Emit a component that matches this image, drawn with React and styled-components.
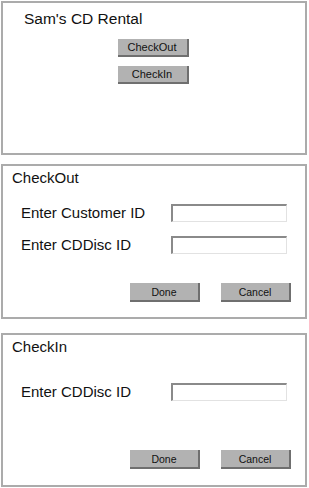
import React from "react";
import styled, { createGlobalStyle } from "styled-components";

const Global = createGlobalStyle`
  html, body { margin: 0; padding: 0; background: #fff; }
  body { font-family: "Liberation Sans", Arial, sans-serif; color: #111; }
`;

const Page = styled.div`
  width: 309px;
  height: 488px;
  padding: 1px 0 0 1px;
  box-sizing: border-box;
  display: flex;
  flex-direction: column;
`;

const Panel = styled.section`
  box-sizing: border-box;
  width: 306px;
  height: ${(p) => p.$h}px;
  margin-top: ${(p) => p.$mt || 0}px;
  border: 2px solid #ababab;
  background: #fff;
  display: flex;
  flex-direction: column;
`;

const MainTitle = styled.div`
  font-size: 15.5px;
  line-height: 18px;
  margin: 7px 0 0 21px;
`;

const MenuButtons = styled.div`
  display: flex;
  flex-direction: column;
  align-items: center;
  gap: 9px;
  margin-top: 11px;
  padding-right: 2px;
`;

const RaisedButton = styled.button`
  box-sizing: border-box;
  width: ${(p) => p.$w || 71}px;
  height: ${(p) => p.$h || 18}px;
  background: #b2b2b2;
  border: none;
  border-right: 2px solid #6f6f6f;
  border-bottom: 2px solid #6f6f6f;
  font-family: "Liberation Sans", Arial, sans-serif;
  font-size: ${(p) => p.$fs || 10.5}px;
  color: #111;
  padding: 0;
  display: flex;
  align-items: center;
  justify-content: center;
`;

const DialogTitle = styled.div`
  font-size: 15px;
  line-height: 17px;
  margin: 3px 0 0 9px;
`;

const Form = styled.div`
  display: grid;
  grid-template-columns: 150px 116px;
  row-gap: 14px;
  margin: ${(p) => p.$mt}px 0 0 18px;
  align-items: center;
`;

const Label = styled.label`
  font-size: 15px;
  line-height: 18px;
`;

const Field = styled.div`
  box-sizing: border-box;
  width: 116px;
  height: 18px;
  background: #fff;
  border-top: 2px solid #8a8a8a;
  border-left: 2px solid #8a8a8a;
  border-right: 1px solid #e2e2e2;
  border-bottom: 1px solid #e2e2e2;
`;

const Actions = styled.div`
  display: flex;
  justify-content: flex-end;
  gap: 21px;
  margin-top: auto;
  margin-bottom: ${(p) => p.$mb}px;
  padding-right: 14px;
`;

export default function App() {
  return (
    <>
      <Global />
      <Page>
        <Panel $h={154}>
          <MainTitle>Sam's CD Rental</MainTitle>
          <MenuButtons>
            <RaisedButton $fs={11}>CheckOut</RaisedButton>
            <RaisedButton $fs={11}>CheckIn</RaisedButton>
          </MenuButtons>
        </Panel>

        <Panel $h={155} $mt={9}>
          <DialogTitle>CheckOut</DialogTitle>
          <Form $mt={18}>
            <Label>Enter Customer ID</Label>
            <Field />
            <Label>Enter CDDisc ID</Label>
            <Field />
          </Form>
          <Actions $mb={15}>
            <RaisedButton $w={70} $h={19}>Done</RaisedButton>
            <RaisedButton $w={70} $h={19}>Cancel</RaisedButton>
          </Actions>
        </Panel>

        <Panel $h={154} $mt={14}>
          <DialogTitle>CheckIn</DialogTitle>
          <Form $mt={28}>
            <Label>Enter CDDisc ID</Label>
            <Field />
          </Form>
          <Actions $mb={16}>
            <RaisedButton $w={70} $h={19}>Done</RaisedButton>
            <RaisedButton $w={70} $h={19}>Cancel</RaisedButton>
          </Actions>
        </Panel>
      </Page>
    </>
  );
}
